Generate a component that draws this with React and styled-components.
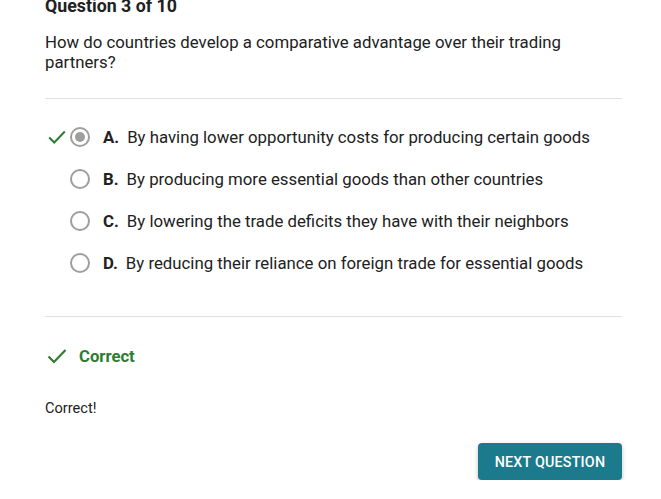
import styled, { createGlobalStyle } from 'styled-components';

const GlobalStyle = createGlobalStyle`
  body {
    margin: 0;
    background: #fff;
    font-family: Roboto, "Liberation Sans", sans-serif;
    color: #212121;
  }
`;

const Page = styled.main`
  width: 577px;
  margin-left: 45px;
  margin-top: -4px;
`;

const Heading = styled.h2`
  margin: 0;
  font-size: 17.8px;
  line-height: 20px;
  font-weight: 700;
`;

const Prompt = styled.p`
  margin: 17px 0 0;
  font-size: 16.8px;
  line-height: 19.5px;
`;

const Divider = styled.hr`
  border: none;
  border-top: 1px solid #e0e0e0;
  margin: ${(props) => props.$gap};
`;

const Options = styled.ul`
  list-style: none;
  margin: 0;
  padding: 0;
  display: flex;
  flex-direction: column;
  gap: 20px;
`;

const Option = styled.li`
  display: flex;
  align-items: center;
  height: 22px;
  font-size: 16.8px;
`;

const Mark = styled.span`
  width: 24px;
  display: flex;
  justify-content: center;
  margin-right: 1px;
`;

const Radio = styled.span`
  width: 20px;
  height: 20px;
  border-radius: 50%;
  border: 2px solid #9e9e9e;
  box-sizing: border-box;
  display: flex;
  align-items: center;
  justify-content: center;
  margin-right: 13px;

  &::after {
    content: '';
    width: 10px;
    height: 10px;
    border-radius: 50%;
    background: ${(props) => (props.$checked ? '#9e9e9e' : 'transparent')};
  }
`;

const Letter = styled.b`
  margin-right: 8px;
`;

const Result = styled.div`
  display: flex;
  align-items: center;
  gap: 10px;
  color: #2e7d32;
  font-weight: 700;
  font-size: 16.7px;
`;

const Feedback = styled.p`
  margin: 31px 0 0;
  font-size: 14.6px;
`;

const Footer = styled.div`
  display: flex;
  justify-content: flex-end;
  margin-top: 26px;
`;

const NextButton = styled.button`
  background: #1b7a8c;
  color: #fff;
  border: none;
  border-radius: 4px;
  height: 37px;
  width: 144px;
  font-family: Roboto, "Liberation Sans", sans-serif;
  font-weight: 500;
  font-size: 14.3px;
  letter-spacing: 0.2px;
  box-shadow: 0 2px 4px rgba(0, 0, 0, 0.25);
`;

function Check({ size = 22 }) {
  return (
    <svg width={size} height={size} viewBox="0 0 24 24" fill="none" stroke="#2e7d32" strokeWidth="2.2">
      <path d="M3.5 12.5l5.5 5.5L20.5 6" />
    </svg>
  );
}

const answers = [
  { letter: 'A.', text: 'By having lower opportunity costs for producing certain goods', checked: true },
  { letter: 'B.', text: 'By producing more essential goods than other countries' },
  { letter: 'C.', text: 'By lowering the trade deficits they have with their neighbors' },
  { letter: 'D.', text: 'By reducing their reliance on foreign trade for essential goods' },
];

export default function App() {
  return (
    <>
      <GlobalStyle />
      <Page>
        <Heading>Question 3 of 10</Heading>
        <Prompt>
          How do countries develop a comparative advantage over their trading partners?
        </Prompt>
        <Divider $gap="26px 0 27px" />
        <Options>
          {answers.map((a) => (
            <Option key={a.letter}>
              <Mark>{a.checked && <Check />}</Mark>
              <Radio $checked={a.checked} />
              <Letter>{a.letter}</Letter>
              {a.text}
            </Option>
          ))}
        </Options>
        <Divider $gap="42px 0 27px" />
        <Result>
          <Check size={24} />
          Correct
        </Result>
        <Feedback>Correct!</Feedback>
        <Footer>
          <NextButton type="button">NEXT QUESTION</NextButton>
        </Footer>
      </Page>
    </>
  );
}
